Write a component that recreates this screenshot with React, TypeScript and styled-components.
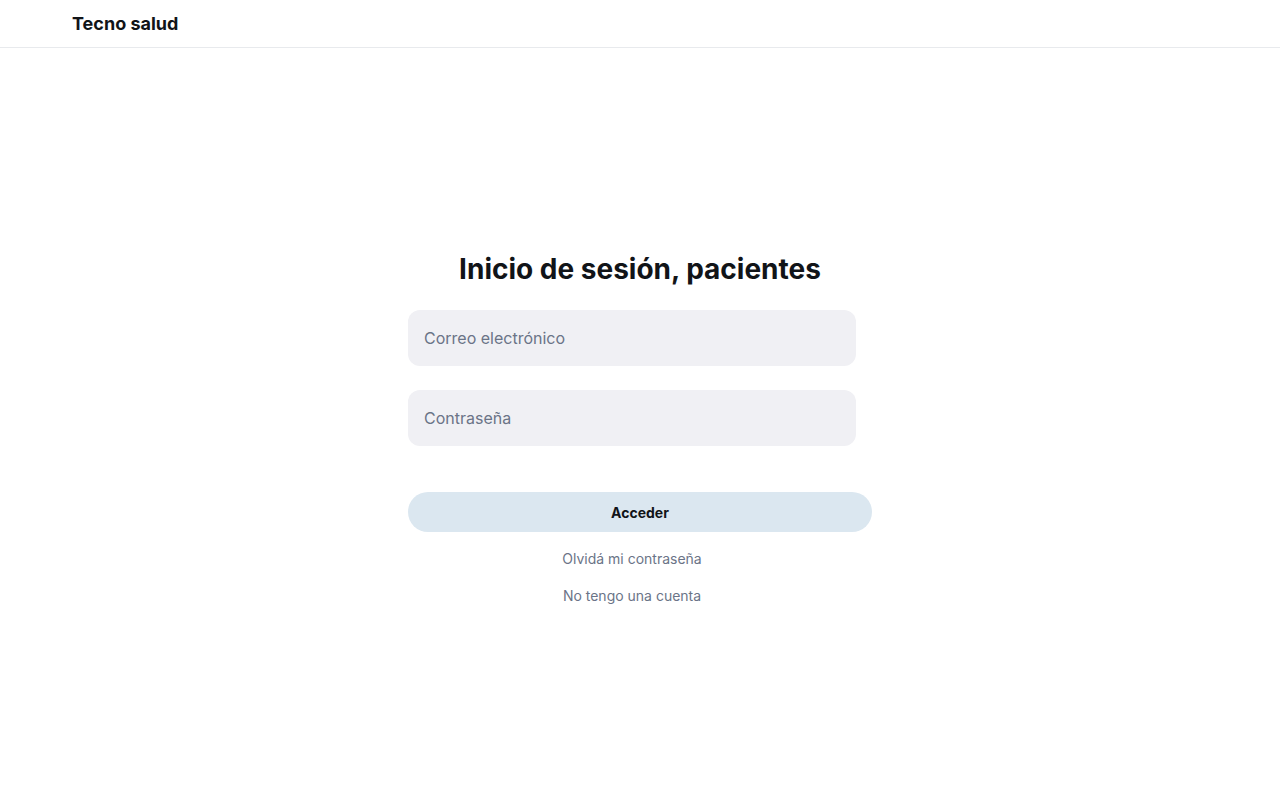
import React from "react";
import styled, { createGlobalStyle } from "styled-components";

const Global = createGlobalStyle`
  html, body { margin: 0; padding: 0; background: #ffffff; }
  body { font-family: Inter, "Noto Sans", sans-serif; color: #111418; }
  * { box-sizing: border-box; }
`;

const Page = styled.div`
  min-height: 800px;
  display: flex;
  flex-direction: column;
  background: #ffffff;
`;

const Header = styled.header`
  height: 48px;
  border-bottom: 1px solid #e8eaed;
  display: flex;
  align-items: center;
  padding: 0 72px;
`;

const Brand = styled.h1`
  margin: 0;
  font-size: 18px;
  font-weight: 700;
  line-height: 23px;
  color: #111418;
  padding-bottom: 1px;
`;

const Main = styled.main`
  display: flex;
  justify-content: center;
  padding-top: 203px;
`;

const Form = styled.form`
  width: 464px;
  display: flex;
  flex-direction: column;
`;

const Title = styled.h2`
  margin: 0 0 23px;
  font-size: 28px;
  line-height: 36px;
  font-weight: 700;
  text-align: center;
  color: #111418;
`;

const Input = styled.input<{ $gap: number }>`
  width: 448px;
  height: 56px;
  border: none;
  outline: none;
  border-radius: 12px;
  background: #f0f0f4;
  padding: 0 16px;
  font-family: Inter, "Noto Sans", sans-serif;
  font-size: 16px;
  color: #111418;
  margin-bottom: ${(p) => p.$gap}px;
  &::placeholder { color: #6b7487; }
`;

const Button = styled.button`
  width: 464px;
  height: 40px;
  border: none;
  border-radius: 20px;
  background: #dbe7f0;
  font-family: Inter, "Noto Sans", sans-serif;
  font-size: 14px;
  font-weight: 700;
  color: #111418;
  cursor: pointer;
  margin-bottom: 16px;
`;

const Links = styled.div`
  width: 448px;
  display: flex;
  flex-direction: column;
  align-items: center;
  gap: 16px;
`;

const LinkText = styled.a`
  font-size: 14px;
  line-height: 21px;
  color: #6b7487;
  text-decoration: none;
  cursor: pointer;
`;

export default function App() {
  return (
    <>
      <Global />
      <Page>
        <Header>
          <Brand>Tecno salud</Brand>
        </Header>
        <Main>
          <Form onSubmit={(e) => e.preventDefault()}>
            <Title>Inicio de sesión, pacientes</Title>
            <Input $gap={24} type="email" placeholder="Correo electrónico" />
            <Input $gap={46} type="password" placeholder="Contraseña" />
            <Button type="submit">Acceder</Button>
            <Links>
              <LinkText>Olvidá mi contraseña</LinkText>
              <LinkText>No tengo una cuenta</LinkText>
            </Links>
          </Form>
        </Main>
      </Page>
    </>
  );
}
